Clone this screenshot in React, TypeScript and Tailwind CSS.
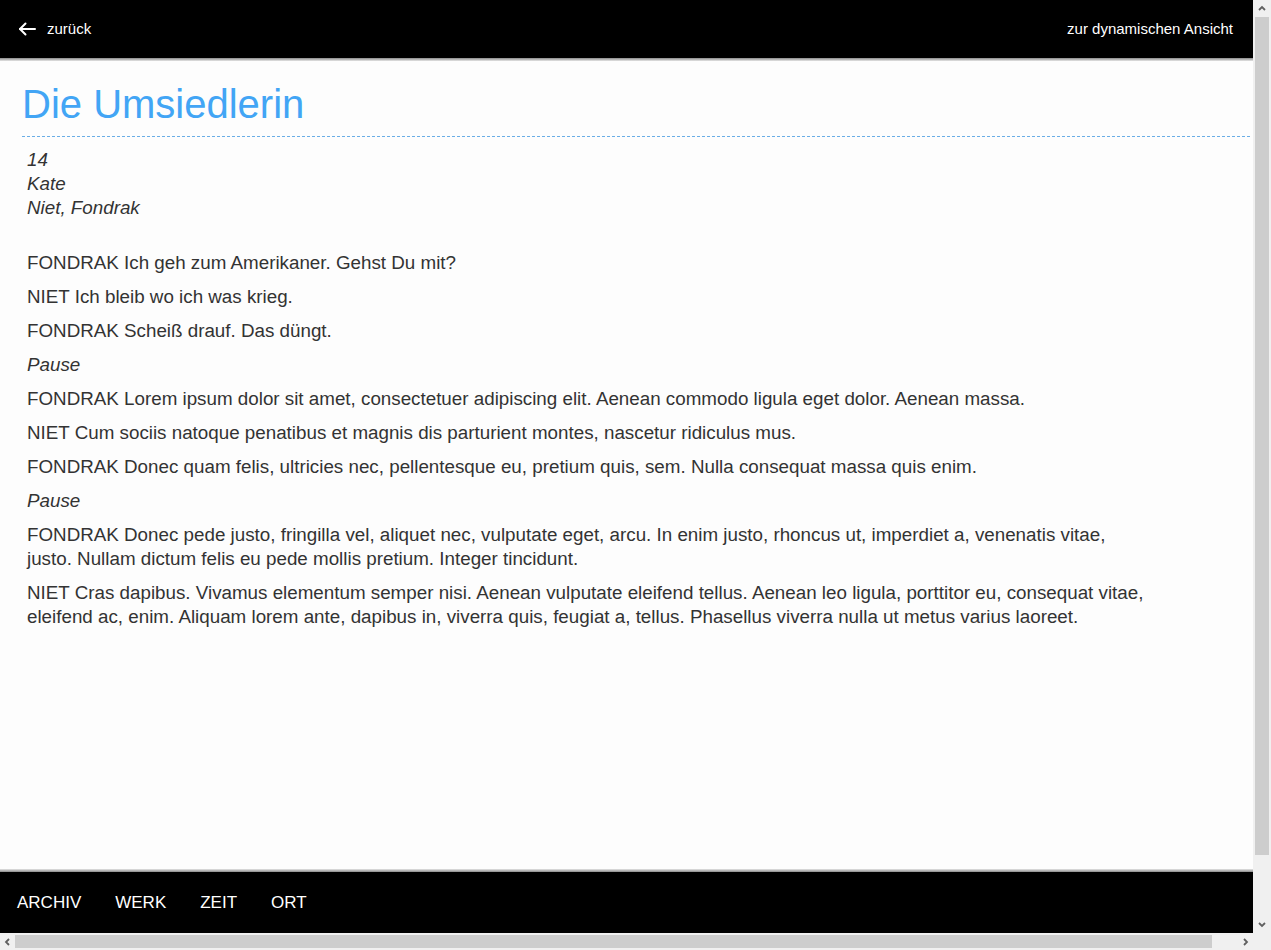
import React from "react";

const lines: { who?: string; text: string; pause?: boolean }[] = [
  { who: "FONDRAK", text: "Ich geh zum Amerikaner. Gehst Du mit?" },
  { who: "NIET", text: "Ich bleib wo ich was krieg." },
  { who: "FONDRAK", text: "Scheiß drauf. Das düngt." },
  { pause: true, text: "Pause" },
  {
    who: "FONDRAK",
    text: "Lorem ipsum dolor sit amet, consectetuer adipiscing elit. Aenean commodo ligula eget dolor. Aenean massa.",
  },
  { who: "NIET", text: "Cum sociis natoque penatibus et magnis dis parturient montes, nascetur ridiculus mus." },
  { who: "FONDRAK", text: "Donec quam felis, ultricies nec, pellentesque eu, pretium quis, sem. Nulla consequat massa quis enim." },
  { pause: true, text: "Pause" },
  {
    who: "FONDRAK",
    text: "Donec pede justo, fringilla vel, aliquet nec, vulputate eget, arcu. In enim justo, rhoncus ut, imperdiet a, venenatis vitae, justo. Nullam dictum felis eu pede mollis pretium. Integer tincidunt.",
  },
  {
    who: "NIET",
    text: "Cras dapibus. Vivamus elementum semper nisi. Aenean vulputate eleifend tellus. Aenean leo ligula, porttitor eu, consequat vitae, eleifend ac, enim. Aliquam lorem ante, dapibus in, viverra quis, feugiat a, tellus. Phasellus viverra nulla ut metus varius laoreet.",
  },
];

const navItems = ["ARCHIV", "WERK", "ZEIT", "ORT"];

const ArrowBack = () => (
  <svg width="18" height="14" viewBox="0 0 18 14" fill="none" stroke="white" strokeWidth="2" strokeLinecap="round" strokeLinejoin="round">
    <path d="M17 7H2" />
    <path d="M7.5 1.5L2 7l5.5 5.5" />
  </svg>
);

const Chevron = ({ dir }: { dir: "up" | "down" | "left" | "right" }) => {
  const d = {
    up: "M2 6l3-3 3 3",
    down: "M2 3l3 3 3-3",
    left: "M6 2L3 5l3 3",
    right: "M4 2l3 3-3 3",
  }[dir];
  return (
    <svg width="10" height="10" viewBox="0 0 10 10" fill="none" stroke="#606060" strokeWidth="1.8">
      <path d={d} />
    </svg>
  );
};

export default function App() {
  return (
    <div className="w-[1271px] h-[950px] flex flex-col overflow-hidden bg-white font-['Liberation_Sans',Arial,sans-serif]">
      <div className="flex flex-1 min-h-0">
        <div className="flex-1 min-w-0 flex flex-col">
          {/* top bar */}
          <header>
            <div className="h-[58px] bg-black text-white text-[15px] flex items-center justify-between pl-[18px] pr-[20px]">
              <a href="#" className="flex items-center gap-[11px]">
                <ArrowBack />
                <span>zurück</span>
              </a>
              <a href="#">zur dynamischen Ansicht</a>
            </div>
            <div className="h-[3px] bg-gradient-to-b from-[#8a8a8a] to-[#e6e6e6]" />
          </header>

          <main className="flex-1 min-h-0 overflow-hidden bg-[#fdfdfd] pl-[22px] pr-[3px]">
            <h1 className="mt-[19px] text-[40px] leading-[48px] text-[#42a5f5] pb-[8px] border-b border-dashed border-[#6aaee6]">
              Die Umsiedlerin
            </h1>
            <div className="pl-[5px] text-[18.8px] leading-[24px] text-[#333] max-w-[1124px]">
              <div className="italic mt-[11px]">
                <div>14</div>
                <div>Kate</div>
                <div>Niet, Fondrak</div>
              </div>
              <div className="mt-[31px] flex flex-col gap-[10px]">
                {lines.map((l, i) =>
                  l.pause ? (
                    <p key={i} className="italic">
                      {l.text}
                    </p>
                  ) : (
                    <p key={i}>
                      {l.who} {l.text}
                    </p>
                  )
                )}
              </div>
            </div>
          </main>

          {/* bottom nav */}
          <footer>
            <div className="h-[3px] bg-gradient-to-b from-[#e6e6e6] to-[#8a8a8a]" />
            <nav className="h-[61px] bg-black flex items-center text-white text-[17px]">
              {navItems.map((n) => (
                <a key={n} href="#" className="px-[17px]">
                  {n}
                </a>
              ))}
            </nav>
          </footer>
        </div>

        {/* vertical scrollbar */}
        <div className="w-[18px] bg-[#f0f0f0] flex flex-col">
          <div className="h-[17px] flex items-center justify-center">
            <Chevron dir="up" />
          </div>
          <div className="h-[838px] mx-[2px] bg-[#cdcdcd]" />
          <div className="flex-1" />
          <div className="h-[17px] flex items-center justify-center">
            <Chevron dir="down" />
          </div>
        </div>
      </div>

      {/* horizontal scrollbar */}
      <div className="h-[17px] flex bg-[#f0f0f0]">
        <div className="w-[15px] flex items-center justify-center">
          <Chevron dir="left" />
        </div>
        <div className="w-[1197px] my-[2px] bg-[#cdcdcd]" />
        <div className="flex-1" />
        <div className="w-[17px] flex items-center justify-center">
          <Chevron dir="right" />
        </div>
        <div className="w-[18px] bg-[#f0f0f0]" />
      </div>
    </div>
  );
}
